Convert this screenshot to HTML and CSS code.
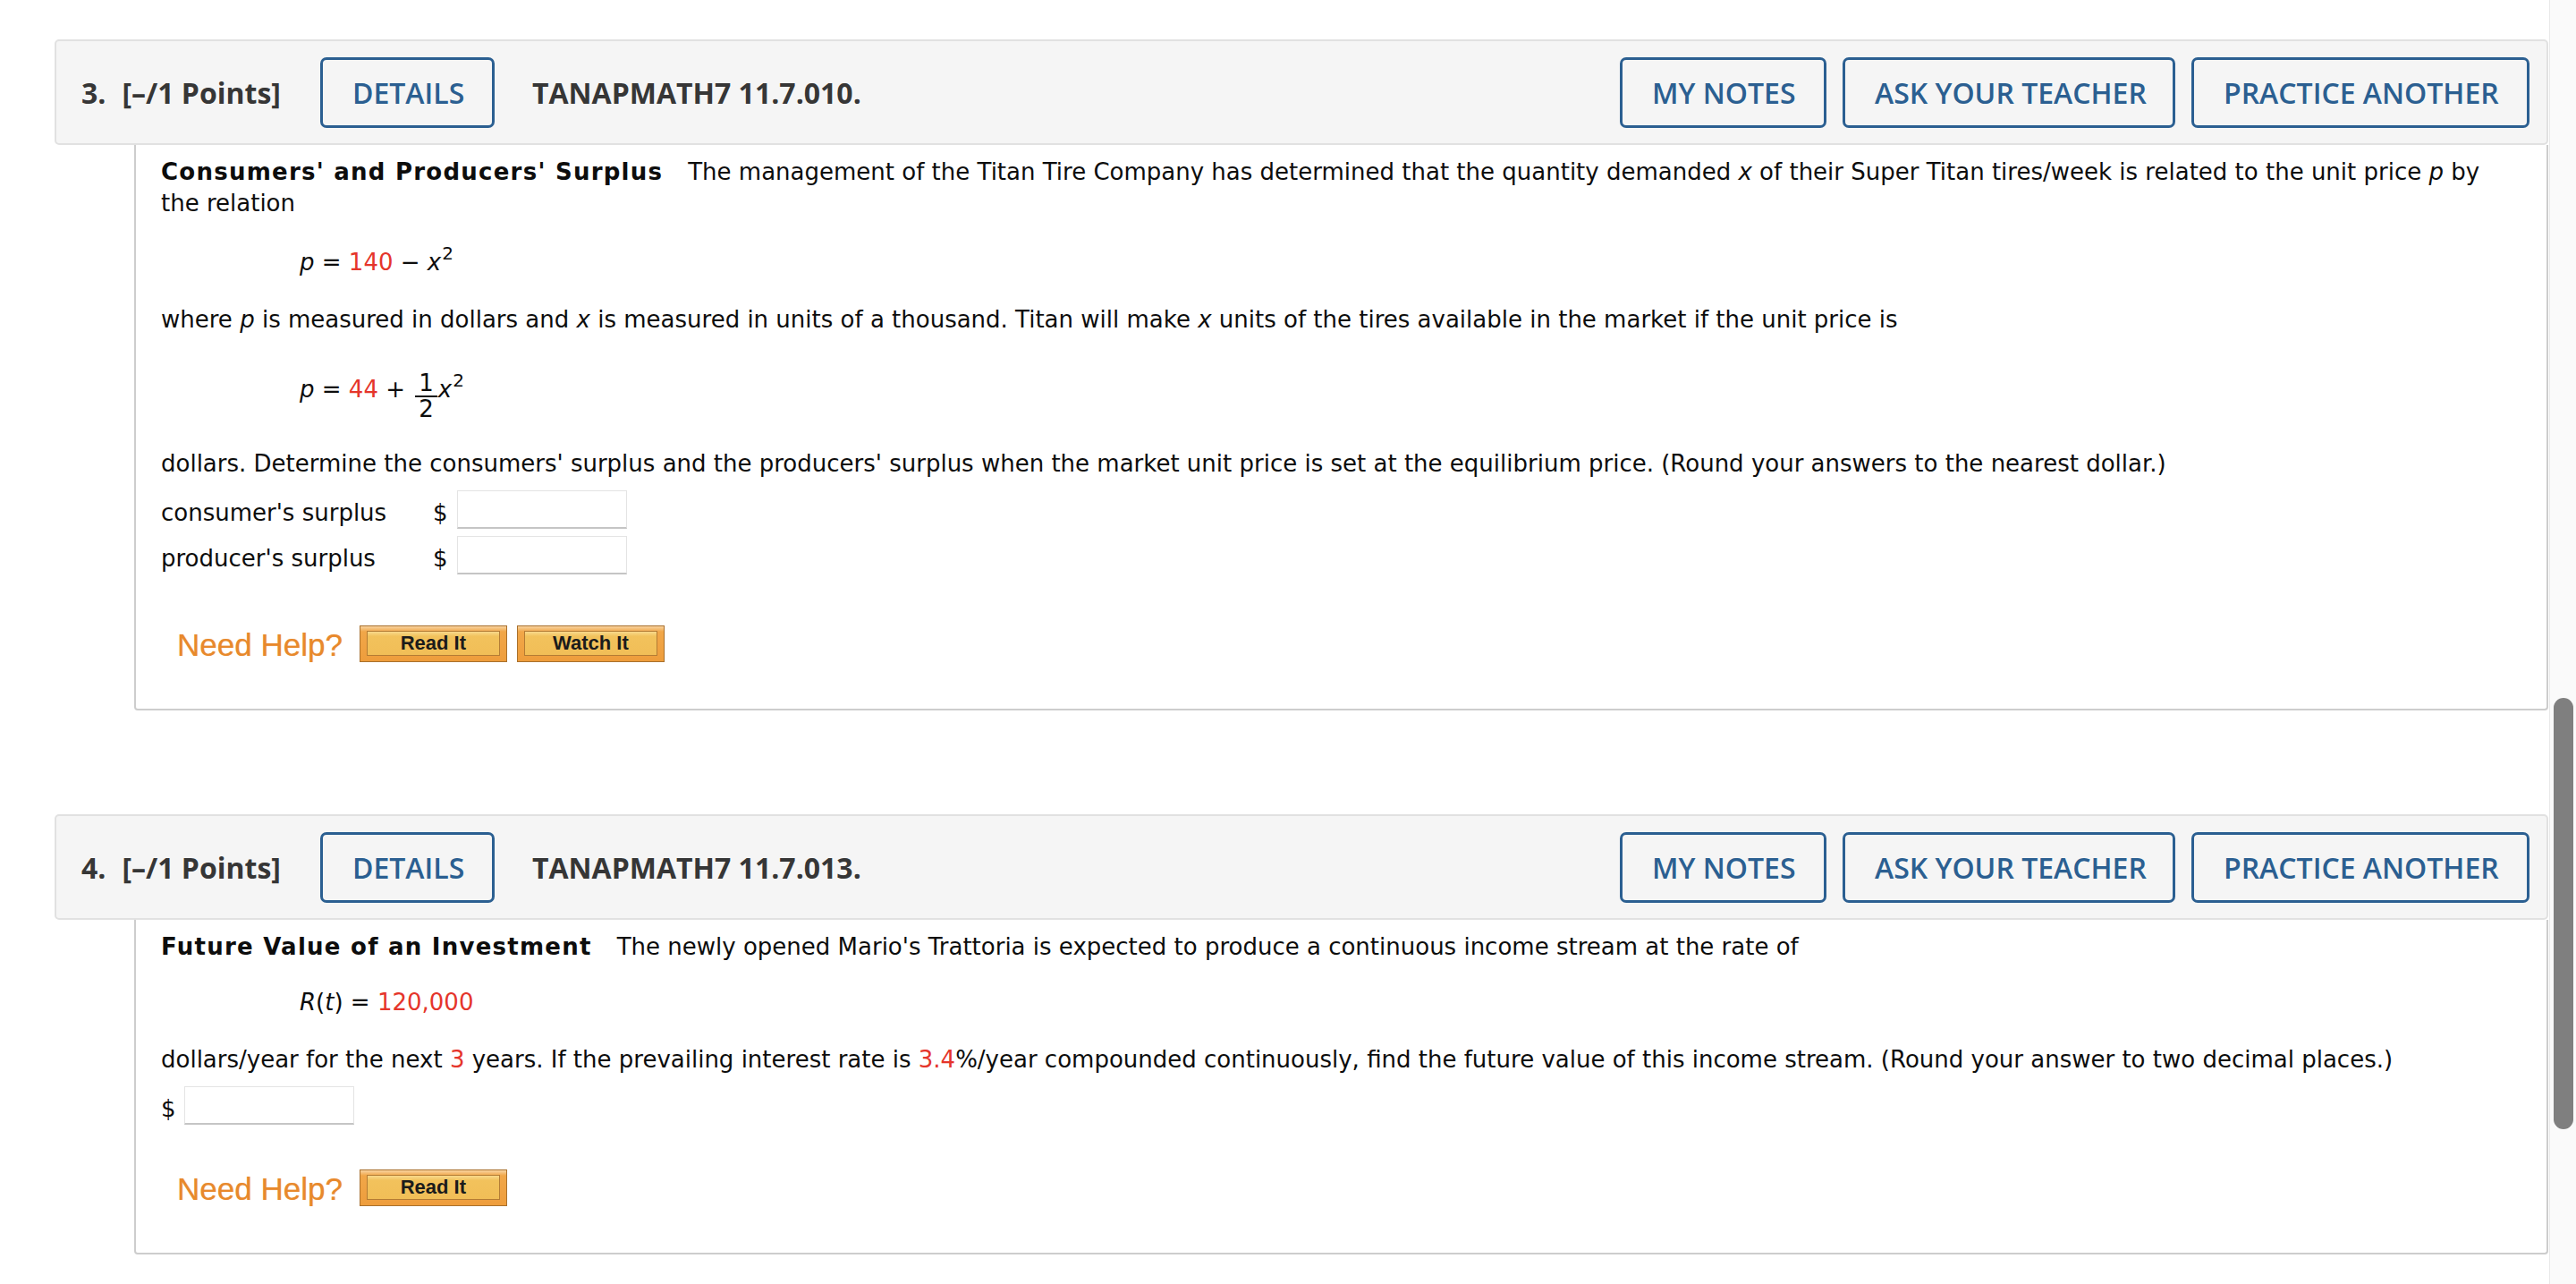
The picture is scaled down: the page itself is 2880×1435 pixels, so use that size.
FILE: index.html
```html
<!DOCTYPE html>
<html lang="en">
<head>
<meta charset="utf-8">
<title>Questions</title>
<link rel="stylesheet" href="styles.css">
</head>
<body>
<div class="page">
  <main class="content">
    <section class="question">
      <header class="q-head">
        <span class="q-num">3.</span>
        <span class="q-pts">[–/1 Points]</span>
        <button class="q-btn q-details">DETAILS</button>
        <span class="q-code">TANAPMATH7 11.7.010.</span>
        <div class="q-actions">
          <button class="q-btn">MY NOTES</button>
          <button class="q-btn">ASK YOUR TEACHER</button>
          <button class="q-btn">PRACTICE ANOTHER</button>
        </div>
      </header>
      <div class="q-body">
        <p class="para"><b class="q-title">Consumers' and Producers' Surplus</b>The management of the Titan Tire Company has determined that the quantity demanded <i>x</i> of their Super Titan tires/week is related to the unit price <i>p</i> by<br>the relation</p>
        <p class="eq eq-first"><i>p</i> = <span class="red">140</span> − <i>x</i><sup>2</sup></p>
        <p class="para">where <i>p</i> is measured in dollars and <i>x</i> is measured in units of a thousand. Titan will make <i>x</i> units of the tires available in the market if the unit price is</p>
        <p class="eq eq-frac"><i>p</i> = <span class="red">44</span> + <span class="frac"><span class="num">1</span><span class="den">2</span></span><i>x</i><sup>2</sup></p>
        <p class="para para-after-frac">dollars. Determine the consumers' surplus and the producers' surplus when the market unit price is set at the equilibrium price. (Round your answers to the nearest dollar.)</p>
        <div class="answers">
          <span class="a-label">consumer's surplus</span><span class="dollar">$</span><input class="ans" type="text">
          <span class="a-label">producer's surplus</span><span class="dollar">$</span><input class="ans" type="text">
        </div>
        <div class="help">
          <span class="help-label">Need Help?</span>
          <button class="help-btn"><span>Read It</span></button>
          <button class="help-btn"><span>Watch It</span></button>
        </div>
      </div>
    </section>

    <section class="question">
      <header class="q-head">
        <span class="q-num">4.</span>
        <span class="q-pts">[–/1 Points]</span>
        <button class="q-btn q-details">DETAILS</button>
        <span class="q-code">TANAPMATH7 11.7.013.</span>
        <div class="q-actions">
          <button class="q-btn">MY NOTES</button>
          <button class="q-btn">ASK YOUR TEACHER</button>
          <button class="q-btn">PRACTICE ANOTHER</button>
        </div>
      </header>
      <div class="q-body">
        <p class="para"><b class="q-title">Future Value of an Investment</b>The newly opened Mario's Trattoria is expected to produce a continuous income stream at the rate of</p>
        <p class="eq eq-short"><i>R</i>(<i>t</i>) = <span class="red">120,000</span></p>
        <p class="para">dollars/year for the next <span class="red">3</span> years. If the prevailing interest rate is <span class="red">3.4</span>%/year compounded continuously, find the future value of this income stream. (Round your answer to two decimal places.)</p>
        <div class="single-answer">
          <span class="dollar">$</span><input class="ans" type="text">
        </div>
        <div class="help help-4">
          <span class="help-label">Need Help?</span>
          <button class="help-btn"><span>Read It</span></button>
        </div>
      </div>
    </section>
  </main>
  <aside class="scrollbar"><div class="thumb"></div></aside>
</div>
</body>
</html>
```

FILE: styles.css
```css
html, body {
  margin: 0;
  padding: 0;
  height: 100%;
  overflow: hidden;
  background: #ffffff;
}

.page {
  display: flex;
  height: 1435px;
}

.content {
  flex: 1;
  padding: 44px 1px 0 61px;
  min-width: 0;
}

.question + .question {
  margin-top: 116px;
}

/* ---------- header bar ---------- */
.q-head {
  display: flex;
  align-items: center;
  box-sizing: border-box;
  height: 118px;
  padding: 0 19px 0 28px;
  background: #f5f5f5;
  border: 2px solid #e1e1e1;
  border-radius: 5px;
  font-family: "Open Sans", "DejaVu Sans", sans-serif;
  font-size: 32px;
  color: #363636;
}

.q-num,
.q-pts,
.q-code {
  font-weight: 700;
  white-space: nowrap;
}

.q-pts {
  margin-left: 18px;
}

.q-code {
  margin-left: 42px;
}

.q-btn {
  box-sizing: border-box;
  height: 79px;
  padding: 0 33px;
  background: transparent;
  border: 3px solid #2b5f91;
  border-radius: 7px;
  font-family: "Open Sans", "DejaVu Sans", sans-serif;
  font-size: 32px;
  font-weight: 600;
  color: #2b5f91;
  white-space: nowrap;
  cursor: pointer;
}

.q-details {
  margin-left: 44px;
  width: 195px;
}

.q-actions {
  margin-left: auto;
  display: flex;
  gap: 18px;
}

.q-actions .q-btn:nth-child(1) { width: 231px; }
.q-actions .q-btn:nth-child(2) { width: 372px; }
.q-actions .q-btn:nth-child(3) { width: 378px; }

/* ---------- body ---------- */
.q-body {
  margin-left: 89px;
  padding: 13px 28px 52px 28px;
  border: 2px solid #cdcdcd;
  border-top: 0;
  border-radius: 0 0 4px 4px;
  font-family: "DejaVu Sans", Verdana, sans-serif;
  font-size: 26px;
  line-height: 35px;
  color: #0d0d0d;
}

.para,
.eq {
  margin: 0;
}

.para + .eq,
.eq + .para {
  margin-top: 29px;
}

.eq-first {
  margin-top: 31px !important;
}

.eq-short {
  margin-top: 27px !important;
}

.eq {
  padding-left: 155px;
  line-height: 35px;
}

.eq sup {
  font-size: 20px;
  line-height: 0;
  vertical-align: 12px;
  margin-left: 1px;
}

.eq-frac {
  margin-top: 43px !important;
}

.para-after-frac {
  margin-top: 47px !important;
}

.frac {
  display: inline-flex;
  flex-direction: column;
  align-items: center;
  vertical-align: 7px;
  font-size: 26px;
  line-height: 23px;
  margin: -15px 1px -15px 3px;
}

.frac .num {
  padding: 0 4px 2px;
  border-bottom: 2px solid #111111;
}

.frac .den {
  padding: 2px 4px 0;
}

.q-title {
  margin-right: 28px;
  letter-spacing: 1.25px;
}

.red {
  color: #e5352b;
}

/* ---------- answers ---------- */
.answers {
  display: grid;
  grid-template-columns: 294px 17px 190px;
  column-gap: 10px;
  row-gap: 8px;
  align-items: center;
  margin-top: 12px;
  justify-content: start;
}

.single-answer {
  display: flex;
  align-items: center;
  gap: 9px;
  margin-top: 12px;
}

.ans {
  box-sizing: border-box;
  width: 190px;
  height: 43px;
  margin: 0;
  padding: 0 6px;
  border: 1px solid #e4e4e4;
  border-bottom: 2px solid #c5c5c5;
  background: #ffffff;
  font: 26px "DejaVu Sans", sans-serif;
}

.dollar {
  position: relative;
  top: 4px;
}

.a-label {
  position: relative;
  top: 4px;
}

/* ---------- need help ---------- */
.help {
  display: flex;
  align-items: center;
  margin: 57px 0 0 18px;
}

.help-4 {
  margin-top: 50px;
}

.help-label {
  font-family: "Liberation Sans", Arial, sans-serif;
  font-size: 35px;
  color: #e8892c;
  margin-right: 19px;
  position: relative;
  top: 1px;
  text-shadow: 0 0 1px rgba(232, 137, 44, 0.6);
}

.help-btn {
  box-sizing: border-box;
  width: 165px;
  height: 41px;
  margin: 0 11px 0 0;
  padding: 5px 7px 6px 7px;
  border: 1px solid #a9702c;
  background: linear-gradient(#f8d3a0 0, #f1a749 15%, #ee9d3c 100%);
  cursor: pointer;
}

.help-btn span {
  display: flex;
  align-items: center;
  justify-content: center;
  height: 100%;
  box-sizing: border-box;
  border: 1px solid #b47c34;
  background: linear-gradient(#f8d98c 0, #f2c25c 20%, #f1be57 100%);
  font-family: "Liberation Sans", Arial, sans-serif;
  font-weight: 700;
  font-size: 22px;
  color: #1b1b1b;
}

/* ---------- scrollbar ---------- */
.scrollbar {
  flex: none;
  width: 30px;
  box-sizing: border-box;
  border-left: 1px solid #e9e9e9;
  background: #fafafa;
  padding: 780px 0 0 4px;
}

.thumb {
  width: 22px;
  height: 482px;
  border-radius: 11px;
  background: #7f7f7f;
}
```
